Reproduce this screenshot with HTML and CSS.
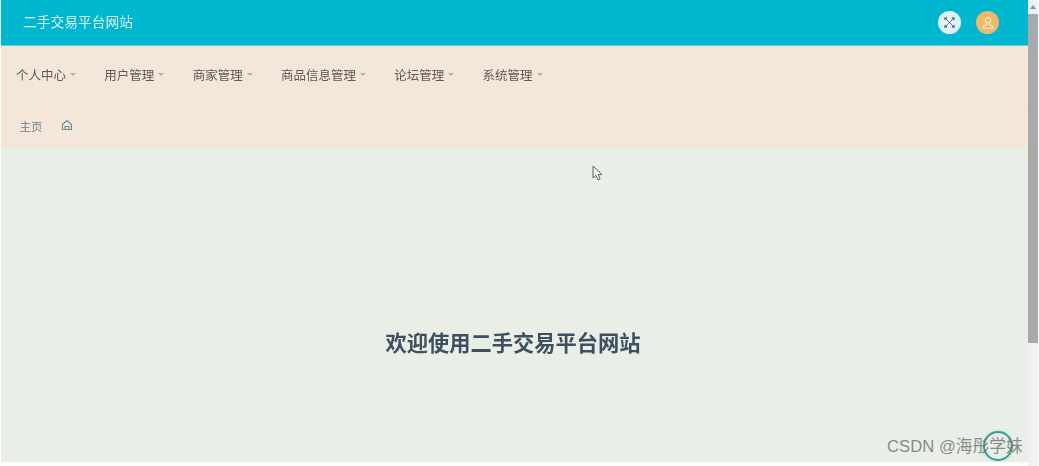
FILE: index.html
```html
<!DOCTYPE html>
<html lang="zh">
<head>
<meta charset="utf-8">
<title>二手交易平台网站</title>
<link rel="stylesheet" href="styles.css">
</head>
<body>
<div class="frame">
  <main class="app">
    <header class="topbar">
      <div class="brand">二手交易平台网站</div>
      <div class="actions">
        <span class="circle circle-light">
          <svg viewBox="0 0 16 16" width="11" height="11" fill="none" stroke="#5a686e" stroke-width="1.300">
            <path d="M3 3 13 13M13 3 3 13"/>
            <path d="M1.500 4.500v-3h3M11.500 1.500h3v3M14.500 11.500v3h-3M4.500 14.500h-3v-3" stroke-width="2"/>
          </svg>
        </span>
        <span class="circle circle-orange">
          <svg viewBox="0 0 16 16" width="14" height="14" fill="none" stroke="#fbeedb" stroke-width="1.300">
            <circle cx="8" cy="5" r="3"/>
            <path d="M6.500 8.500v1.200L2.500 12v2h11v-2l-4-2.300V8.500"/>
          </svg>
        </span>
      </div>
    </header>
    <nav class="menu">
      <a class="menu-item">个人中心<i class="caret"></i></a>
      <a class="menu-item">用户管理<i class="caret"></i></a>
      <a class="menu-item">商家管理<i class="caret"></i></a>
      <a class="menu-item">商品信息管理<i class="caret"></i></a>
      <a class="menu-item">论坛管理<i class="caret"></i></a>
      <a class="menu-item">系统管理<i class="caret"></i></a>
    </nav>
    <div class="crumbs">
      <span class="crumb">主页</span>
      <svg class="home" viewBox="0 0 12 12" width="12" height="12" fill="none" stroke="#6b8a96" stroke-width="1.100">
        <path d="M1.500 5.500 6 1.500l4.500 4v5h-9z"/>
        <path d="M4 10.500V7.500h4v3"/>
      </svg>
    </div>
    <section class="content">
      <h1 class="welcome">欢迎使用二手交易平台网站</h1>
    </section>
  </main>
  <aside class="scrollbar">
    <span class="arrow"></span>
    <span class="thumb"></span>
  </aside>
</div>
<svg class="cursor" viewBox="0 0 12 17" width="12" height="17" fill="#eef2ec" stroke="#5d6468" stroke-width="1">
  <path d="M1 1v12l3-2.600 2 4.600 2.200-1-2-4.400H10z"/>
</svg>
<span class="ring"></span>
<span class="watermark">CSDN @海彤学妹</span>
</body>
</html>
```
FILE: styles.css
```css
* { box-sizing: border-box; }
html, body { margin: 0; height: 100%; overflow: hidden; background: #fff; }
body {
  position: relative;
  font-family: "Noto Sans CJK SC", "Liberation Sans", sans-serif;
}
.frame {
  display: flex;
  height: 462px;
  padding-left: 1px;
  filter: blur(.4px);
}
.app {
  flex: 1;
  display: flex;
  flex-direction: column;
  min-width: 0;
}
.topbar {
  height: 46px;
  flex: none;
  display: flex;
  align-items: center;
  justify-content: space-between;
  background: #00b7d0;
  border-bottom: 1px solid #6cc5cf;
  padding: 0 29px 3px 22px;
}
.brand {
  color: #d9f3f4;
  font-size: 13.750px;
}
.actions { display: flex; gap: 15px; align-items: center; padding-top: 3px; }
.circle {
  width: 23px;
  height: 23px;
  border-radius: 50%;
  display: flex;
  align-items: center;
  justify-content: center;
}
.circle-light { background: #dff1f4; }
.circle-orange { background: #f2b767; }
.menu {
  height: 59px;
  flex: none;
  display: flex;
  align-items: center;
  gap: 28.300px;
  background: #f4e7d9;
  border-bottom: 1px solid #ebe5dc;
  padding: 0 0 2px 15px;
}
.menu-item {
  display: flex;
  align-items: center;
  font-size: 12.500px;
  color: #5b5a56;
}
.caret {
  width: 0;
  height: 0;
  margin-left: 4px;
  border-left: 3.500px solid transparent;
  border-right: 3.500px solid transparent;
  border-top: 3.500px solid #b3b0ab;
}
.crumbs {
  height: 44px;
  flex: none;
  display: flex;
  align-items: center;
  gap: 18px;
  background: #f4e7d9;
  padding: 0 0 3px 18.500px;
}
.crumb { font-size: 11.500px; color: #6b8189; }
.home { margin-bottom: 2px; }
.content {
  flex: 1;
  display: flex;
  align-items: center;
  justify-content: center;
  background: #e9eee7;
  padding: 73px 3px 0 0;
}
.welcome {
  margin: 0;
  font-size: 21.250px;
  font-weight: 700;
  color: #3e5060;
  line-height: 1.2;
}
.scrollbar {
  width: 11px;
  flex: none;
  height: 466px;
  display: flex;
  flex-direction: column;
  background: #f0f0f1;
  border-right: 1px solid #fff;
}
.arrow {
  height: 14px;
  display: flex;
  justify-content: center;
  padding-top: 5px;
}
.arrow::before {
  content: "";
  width: 0;
  height: 0;
  border-left: 3px solid transparent;
  border-right: 3px solid transparent;
  border-bottom: 4px solid #8f8f8f;
}
.thumb {
  height: 329px;
  background: #a9a9a9;
}
.cursor {
  position: absolute;
  left: 592px;
  top: 165px;
}
.ring {
  position: absolute;
  left: 983px;
  top: 431px;
  width: 30px;
  height: 30px;
  border-radius: 50%;
  border: 2.500px solid #35a296;
  box-shadow: 0 0 2px rgba(53, 162, 150, .5);
}
.watermark {
  position: absolute;
  left: 887px;
  top: 436px;
  font-family: "Liberation Sans", "Noto Sans CJK SC", sans-serif;
  font-size: 16.700px;
  line-height: 22px;
  color: rgba(110, 110, 110, .8);
  white-space: nowrap;
}
```
